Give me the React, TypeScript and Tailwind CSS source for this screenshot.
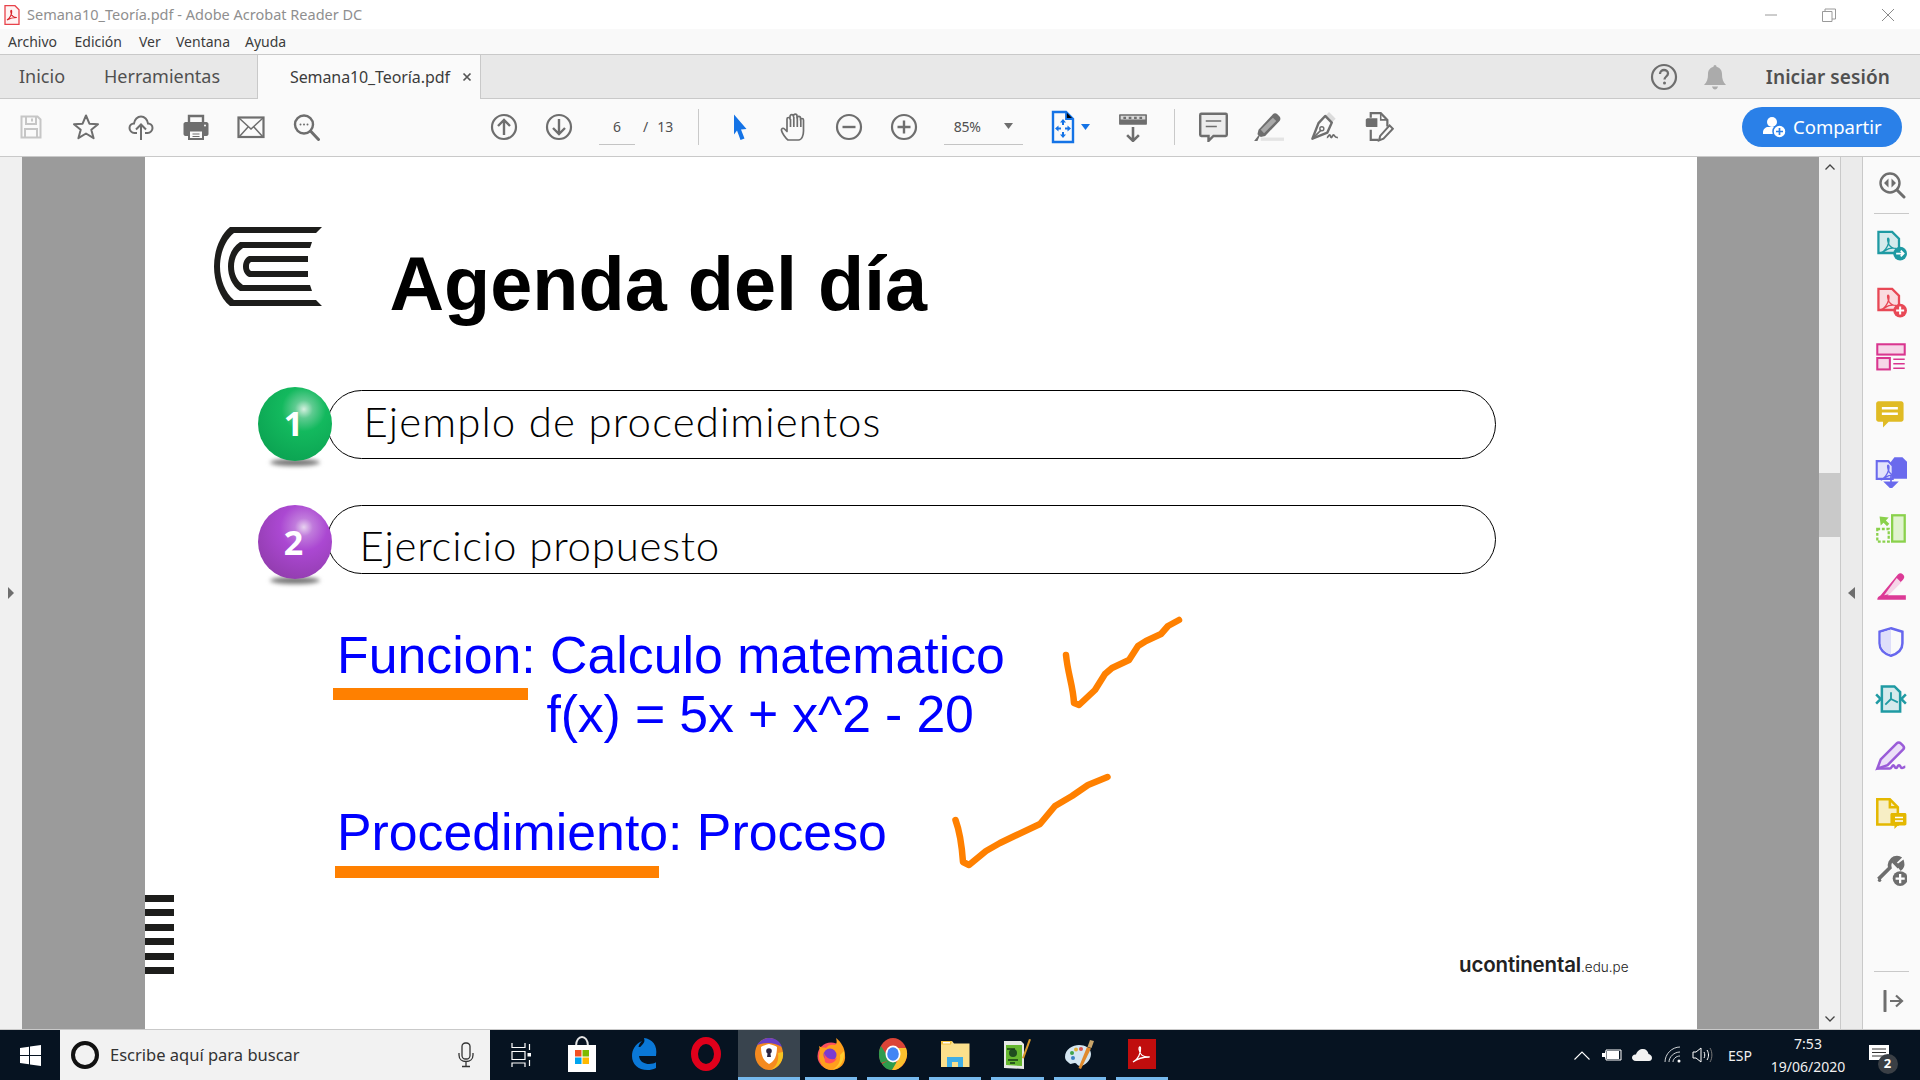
import React from "react";

const G = "#6e6e6e";
const Ui = "font-['Noto_Sans','Open_Sans',sans-serif]";

function Svg({ s = 28, children, className = "" }: { s?: number; children: React.ReactNode; className?: string }) {
  return (
    <svg width={s} height={s} viewBox="0 0 28 28" fill="none" className={className}>
      {children}
    </svg>
  );
}

const Squiggle = ({ c }: { c: string }) => (
  <path d="M5 21c3-1 6-5 7-9 .4-2 .3-4-.5-4s-.6 3 1 6c1.200 2 3 3 6 3-3-.5-7 0-9 1.500-1.500 1-3 2-4.500 2.500z" stroke={c} strokeWidth="1.200" fill="none" />
);

const tools: React.ReactNode[] = [
  <Svg key="save"><path d="M4.500 3.500h16l3 3v18h-19z" stroke="#c6c6c6" strokeWidth="2" fill="#fafafa" /><path d="M9 4v7h10V4M8 24v-8h12v8" stroke="#c6c6c6" strokeWidth="2" /><path d="M15 5.500v3" stroke="#c6c6c6" strokeWidth="2" /></Svg>,
  <Svg key="star"><path d="M14 2.500l3.400 8.200 8.600.5-6.700 5.500 2.300 8.500-7.600-4.700-7.600 4.700 2.300-8.500L2 11.200l8.600-.5z" stroke={G} strokeWidth="2" strokeLinejoin="round" /></Svg>,
  <Svg key="cloud"><path d="M10 20H7.500C4.500 20 2.500 17.500 2.500 15c0-2.500 2-4.500 4.500-4.500C7.500 6.500 10.500 3.500 14 3.500s6.500 3 7 7c2.500 0 4.500 2 4.500 4.500s-2 5-5 5H18" stroke={G} strokeWidth="2" /><path d="M14 27V12M9 16.500l5-5 5 5" stroke={G} strokeWidth="2" /></Svg>,
  <Svg key="print"><path d="M7 9V3h14v6" stroke={G} strokeWidth="2.400" /><path d="M3.500 9h21c1 0 2 1 2 2v10c0 1-1 2-2 2H22v-6H6v6H3.500c-1 0-2-1-2-2V11c0-1 1-2 2-2z" fill={G} /><path d="M7 17.500h14V26H7z" stroke={G} strokeWidth="2" /><path d="M10.500 21h7M10.500 23.500h7" stroke={G} strokeWidth="1.200" /><circle cx="23" cy="12.500" r="1" fill="#fff" /></Svg>,
  <Svg key="mail"><rect x="1.500" y="4.500" width="25" height="19.500" stroke={G} strokeWidth="2.200" /><path d="M2 5l12 11L26 5M2 24l9.500-10.500M26 24L16.500 13.500" stroke={G} strokeWidth="1.500" /></Svg>,
  <Svg key="find"><circle cx="12" cy="11.500" r="9" stroke={G} strokeWidth="2.400" /><path d="M18.500 18l8 8.500" stroke={G} strokeWidth="3" strokeLinecap="round" /><circle cx="8.500" cy="11.500" r="1" fill={G} /><circle cx="12" cy="11.500" r="1" fill={G} /><circle cx="15.500" cy="11.500" r="1" fill={G} /></Svg>,
];

const CircleArrow = ({ d }: { d: "up" | "down" }) => (
  <Svg>
    <circle cx="14" cy="14" r="12" stroke={G} strokeWidth="2.200" />
    <path d={d === "up" ? "M14 22V7M8 13l6-6 6 6" : "M14 6v15M8 15l6 6 6-6"} stroke={G} strokeWidth="2.400" />
  </Svg>
);

const RightIcons: React.ReactNode[] = [
  <Svg key="a" s={32}><path d="M3 2.500h12l6 6V21H3z" fill="#d5eaec" stroke="#1f9aa3" strokeWidth="2" /><Squiggle c="#1f9aa3" /><circle cx="22" cy="21.500" r="6" fill="#1f9aa3" /><path d="M18.500 21.500h6M22.500 19l2.500 2.500-2.500 2.500" stroke="#fff" strokeWidth="1.600" /></Svg>,
  <Svg key="b" s={32}><path d="M3 2.500h12l6 6V21H3z" fill="#fadcdf" stroke="#e84855" strokeWidth="2" /><Squiggle c="#e84855" /><circle cx="22" cy="21.500" r="6" fill="#e84855" /><path d="M18.500 21.500h7M22 18v7" stroke="#fff" strokeWidth="1.800" /></Svg>,
  <Svg key="c" s={32}><rect x="2" y="2" width="24" height="9" fill="#f6d6e8" stroke="#d9358f" strokeWidth="1.800" /><rect x="2" y="14" width="11" height="10" fill="#f6d6e8" stroke="#d9358f" strokeWidth="1.800" /><path d="M16 15h10M16 19h10M16 23h10" stroke="#d9358f" strokeWidth="1.300" /></Svg>,
  <Svg key="d" s={32}><path d="M3 2h20c1 0 2 1 2 2v14c0 1-1 2-2 2H12l-5 5v-5H3c-1 0-2-1-2-2V4c0-1 1-2 2-2z" fill="#e0bb24" /><path d="M6 8h14M6 13h14" stroke="#fff" strokeWidth="2.200" /></Svg>,
  <Svg key="e" s={32}><path d="M17 1h7l4 4v15H14V5z" fill="#6a6aed" /><path d="M1.500 4.500h10l4 4V20h-14z" fill="#e4e4fb" stroke="#6a6aed" strokeWidth="1.800" /><Squiggle c="#6a6aed" /><path d="M14 17v6M9 23h10l-5 5z" fill="#6a6aed" stroke="#6a6aed" strokeWidth="1.500" /></Svg>,
  <Svg key="f" s={32}><rect x="15" y="2" width="11" height="23" fill="#e0f3cf" stroke="#8ad14c" strokeWidth="2" /><path d="M2 14h10v11H2z" stroke="#8ad14c" strokeWidth="2" strokeDasharray="2.500 1.500" /><path d="M4 3l8 1-2.500 2.500 3 3-2 2-3-3L5 11z" fill="#8ad14c" /></Svg>,
  <Svg key="g" s={32}><path d="M2 26c0-2 1-3 3-4L20 4c1.500-1.500 3-1.500 4.500 0s1.500 3 0 4.500L11 22h16v4z" fill="#dc3a96" /><path d="M19 7l4 4-10 10-5 1z" fill="#f6d6e8" /></Svg>,
  <Svg key="h" s={32}><path d="M14 2l10 3v10c0 5-4 9-10 11C8 24 4 20 4 15V5z" fill="#fafafa" stroke="#6767ee" strokeWidth="2.200" /><path d="M14 3L5 5.800V15c0 4.500 3.500 8 9 10z" fill="#dedefa" /></Svg>,
  <Svg key="i" s={32}><path d="M6 3h11l5 5v17H6z" fill="#d5eaec" stroke="#1f9aa3" strokeWidth="2.200" /><path d="M1 10l4 4-4 4M27 10l-4 4 4 4" stroke="#1f9aa3" strokeWidth="2.200" /><path d="M14 8v6M14 14l-5 5M14 14l6 3" stroke="#1f9aa3" strokeWidth="1.600" /></Svg>,
  <Svg key="j" s={32}><path d="M2 25l3-8L19 3c1-1 2.500-1 3.500 0l2 2c1 1 1 2.500 0 3.500L11 22z" fill="#ece0f8" stroke="#9a5cd8" strokeWidth="2.200" /><path d="M2 25h11c1.500 0 2-3 3-3s1 2.500 2.500 2.500 1-2.500 2.500-2.500 1 2.500 2.500 2.500 1.500-1 3-1" stroke="#9a5cd8" strokeWidth="2.200" /></Svg>,
  <Svg key="k" s={32}><path d="M2 2h11l7 7v15H2z" fill="#f7eec5" stroke="#e4b800" strokeWidth="2.200" /><path d="M13 2v7h7" stroke="#e4b800" strokeWidth="2.200" /><path d="M15 14h11c1 0 1.500.5 1.500 1.500v8c0 1-.5 1.500-1.500 1.500h-6l-3 3v-3h-2c-1 0-1.500-.5-1.500-1.500v-8c0-1 .5-1.500 1.500-1.500z" fill="#e4b800" /><path d="M17.500 18h7M17.500 21h7" stroke="#fff" strokeWidth="1.300" /></Svg>,
  <Svg key="l" s={32}><path d="M3 22L13 12c-1-3 .5-7 4-8.500 1.500-.5 3-.5 4 0l-4 4 3 3 4-3c.5 2-.5 4.500-2.500 6" stroke={G} strokeWidth="3.200" /><circle cx="22" cy="21.500" r="6.500" fill={G} /><path d="M18 21.500h8M22 17.500v8" stroke="#fff" strokeWidth="2" /><circle cx="4" cy="23" r="1.500" fill={G} /></Svg>,
];

function Ball({ n, cls, top }: { n: string; cls: string; top: string }) {
  return (
    <div className={`absolute left-[-70px] h-[79px] w-[74px] ${top}`}>
      <div className="absolute bottom-0 left-[12px] h-[7px] w-[50px] rounded-[50%] bg-[#777] blur-[2px]" />
      <div className={`relative flex h-[74px] w-[74px] items-center justify-center rounded-full text-[34px] font-bold text-white font-['Open_Sans',sans-serif] ${cls}`}>
        <span className="mr-[2px]">{n}</span>
      </div>
    </div>
  );
}

function Pill({ text, indent, ball, top, ballTop }: { text: string; indent: string; ball: string; top: string; ballTop: string }) {
  return (
    <div className="relative ml-[182px] h-[69px] w-[1169px] rounded-[35px] border-[1.500px] border-black bg-white">
      <Ball n={ball} top={ballTop} cls={ball === "1"
        ? "bg-[radial-gradient(circle_at_62%_30%,#d5f0e0_0%,#5fcb91_13%,#13b95e_32%,#0ca553_76%,#1fce72_100%)]"
        : "bg-[radial-gradient(circle_at_62%_30%,#e8d2f0_0%,#c07bdc_13%,#ab48d2_34%,#933db0_78%,#b050dc_100%)]"} />
      <div className={`whitespace-nowrap text-[42px] leading-[48px] font-light text-black font-['Lato',sans-serif] ${indent} ${top}`}>{text}</div>
    </div>
  );
}

function TaskIcon({ children, active, cls = "" }: { children: React.ReactNode; active?: boolean; cls?: string }) {
  return (
    <div className={`relative flex h-full w-[62.200px] shrink-0 items-center justify-center ${active ? "bg-[#39444e]" : ""} ${cls}`}>
      <div className="mb-[2px]">{children}</div>
      {active !== undefined && (
        <div className={`absolute bottom-0 h-[3px] bg-[#76b9ed] ${active ? "inset-x-0" : "inset-x-[5px]"}`} />
      )}
    </div>
  );
}

export default function App() {
  return (
    <div className={`flex h-[1080px] w-[1920px] flex-col overflow-hidden bg-white ${Ui}`}>
      {/* Title bar */}
      <div className="flex h-[29px] shrink-0 items-center bg-white">
        <svg width="16" height="20" viewBox="0 0 16 20" className="ml-[4px]">
          <path d="M1 .7h10l4 4V19.300H1z" fill="#fff3f3" stroke="#e8424a" strokeWidth="1.300" />
          <path d="M3 15c3-1.500 5-6 4.700-9-.2-1.300-1.200-.8-.9 1 .4 3 2.500 5.500 6 5.500-3 0-6.500.5-9.800 2.500z" fill="none" stroke="#d8232a" strokeWidth="1.100" />
        </svg>
        <span className="ml-[7px] text-[14.500px] text-[#8f8f8f]">Semana10_Teoría.pdf - Adobe Acrobat Reader DC</span>
        <div className="ml-auto flex items-center">
          <svg width="14" height="14" viewBox="0 0 14 14" className="mr-[44px]"><path d="M1 7h12" stroke="#9a9a9a" /></svg>
          <svg width="14" height="14" viewBox="0 0 14 14" className="mr-[45px]"><path d="M.5 3.500h9.500v10H.5zM3 3.500V1h10.500v10H10" stroke="#9a9a9a" fill="none" /></svg>
          <svg width="14" height="14" viewBox="0 0 14 14" className="mr-[25px]"><path d="M1 1l12 12M13 1L1 13" stroke="#8a8a8a" /></svg>
        </div>
      </div>

      {/* Menu bar */}
      <div className="flex h-[25px] shrink-0 items-center bg-[#f9f9f9] pl-[8px] text-[14px] text-[#3c3c3c]">
        <span className="w-[66.500px]">Archivo</span>
        <span className="w-[64.500px]">Edición</span>
        <span className="w-[37px]">Ver</span>
        <span className="w-[69px]">Ventana</span>
        <span>Ayuda</span>
      </div>

      {/* Tabs */}
      <div className="flex h-[45px] shrink-0 items-stretch border-y border-[#c9c9c9] bg-[#e8e8e8]">
        <div className="flex items-center pl-[19px] text-[18px] text-[#505050]">
          <span className="w-[85px]">Inicio</span>
          <span className="w-[153px]">Herramientas</span>
        </div>
        <div className="-mb-px flex w-[224px] items-center border-x border-[#c9c9c9] bg-[#fafafa] pl-[32px] text-[16px] text-[#3c3c3c] tracking-[-0.100px]">
          <span className="w-[172px]">Semana10_Teoría.pdf</span>
          <svg width="10" height="10" viewBox="0 0 10 10"><path d="M1.500 1.500l7 7M8.500 1.500l-7 7" stroke="#555" strokeWidth="1.700" /></svg>
        </div>
        <div className="ml-auto flex items-center pr-[30px]">
          <svg width="28" height="28" viewBox="0 0 28 28" className="mr-[26px]">
            <circle cx="14" cy="14" r="12" fill="none" stroke={G} strokeWidth="2.200" />
            <path d="M10 11c0-2.500 2-4 4-4s4 1.500 4 3.500c0 3-3.500 3-3.500 6" fill="none" stroke={G} strokeWidth="2.300" />
            <circle cx="14.500" cy="20" r="1.500" fill={G} />
          </svg>
          <svg width="22" height="26" viewBox="0 0 22 26" className="mr-[40px]">
            <path d="M11 1c1 0 1.500.7 1.500 1.800C16 3.700 18 6.500 18 10c0 5 1 8 4 11H0c3-3 4-6 4-11 0-3.500 2-6.300 5.500-7.200C9.500 1.700 10 1 11 1z" fill="#ababab" />
            <path d="M8 22.500h6c-.5 2-1.700 3-3 3s-2.500-1-3-3z" fill="#ababab" />
          </svg>
          <span className="pt-[2px] text-[19px] font-semibold text-[#505050] tracking-[0.100px]">Iniciar sesión</span>
        </div>
      </div>

      {/* Toolbar */}
      <div className="flex h-[58px] shrink-0 items-center border-b border-[#c9c9c9] bg-[#fafafa] pb-[2px] pl-[3.500px]">
        {tools.map((t, i) => (
          <div key={i} className="flex w-[55px] shrink-0 justify-center">{t}</div>
        ))}
        <div className="ml-[143px] flex w-[55px] shrink-0 justify-center"><CircleArrow d="up" /></div>
        <div className="flex w-[55px] shrink-0 justify-center"><CircleArrow d="down" /></div>
        <div className="ml-[12.500px] flex h-[36px] w-[36px] items-center justify-center border-b border-[#c4c4c4] text-[14px] text-[#505050]">6</div>
        <span className="ml-[8px] text-[14px] text-[#505050]">/</span>
        <span className="ml-[9px] text-[14px] text-[#505050]">13</span>
        <div className="ml-[25px] h-[36px] w-px bg-[#c9c9c9]" />
        <div className="ml-[13px] flex w-[55px] shrink-0 justify-center">
          <Svg><path d="M8 1.500l12.500 14.500-5.500.5 3.500 9-4 1.500-3.500-9.500L8 21.500z" fill="#1473e6" /></Svg>
        </div>
        <div className="flex w-[54px] shrink-0 justify-center">
          <Svg><path d="M8 27c-2.500-2-6-7-6.500-9.500-.5-2 1.500-3 3-1.500L7 18.500V6c0-2 3-2 3 0V3.500c0-2.500 3.500-2.500 3.500 0V3c0-2.500 3.500-2.500 3.500 0v2c0-2.300 3.500-2.300 3.500 0v2c0-2 3-2 3 0v11c0 4-1.500 9-5 9zM10.500 6v8M13.800 4v10M17.300 4v10M20.800 6v8" stroke={G} strokeWidth="1.700" strokeLinejoin="round" /></Svg>
        </div>
        <div className="flex w-[55px] shrink-0 justify-center">
          <Svg><circle cx="14" cy="14" r="12" stroke={G} strokeWidth="2.200" /><path d="M7.500 14h13" stroke={G} strokeWidth="2.400" /></Svg>
        </div>
        <div className="flex w-[55px] shrink-0 justify-center">
          <Svg><circle cx="14" cy="14" r="12" stroke={G} strokeWidth="2.200" /><path d="M7.500 14h13M14 7.500v13" stroke={G} strokeWidth="2.400" /></Svg>
        </div>
        <div className="ml-[12.500px] flex h-[36px] w-[79px] shrink-0 items-center border-b border-[#c4c4c4] pl-[10px] text-[14px] text-[#505050] tracking-[-0.300px]">
          <span className="w-[50px]">85%</span>
          <svg width="9" height="6" viewBox="0 0 9 6"><path d="M0 0h9L4.500 6z" fill={G} /></svg>
        </div>
        <div className="ml-[28px] flex w-[42px] shrink-0 items-center">
          <svg width="24" height="34" viewBox="0 0 24 34">
            <path d="M2 2h13l7 7v23H2z" fill="#fafafa" stroke="#1473e6" strokeWidth="2.400" />
            <path d="M15 2v7h7" stroke="#1473e6" strokeWidth="1.800" />
            <path d="M12 9l-3 3.500h2V15h2v-2.500h2zM12 28l-3-3.500h2V22h2v2.500h2zM4 18.500L7.500 15.500v2H10v2H7.500v2zM20 18.500L16.500 15.500v2H14v2h2.500v2z" fill="#1473e6" />
          </svg>
          <svg width="9" height="6" viewBox="0 0 9 6" className="ml-[6px]"><path d="M0 0h9L4.500 6z" fill="#1473e6" /></svg>
        </div>
        <div className="ml-[13px] flex w-[55px] shrink-0 justify-center">
          <Svg s={30}><path d="M2 2h24c.7 0 1 .3 1 1v8c0 .7-.3 1-1 1H2c-.7 0-1-.3-1-1V3c0-.7.3-1 1-1z" fill={G} /><path d="M2.500 3.500h23v3.500h-23z" fill="#d8d8d8" /><path d="M5 5.500h2.500M10 5.500h2.500M15 5.500h2.500M20 5.500h2.500" stroke={G} strokeWidth="2" /><path d="M14 14v13M8.500 21.500l5.500 5.500 5.500-5.500" stroke={G} strokeWidth="2.400" /></Svg>
        </div>
        <div className="ml-[13.500px] h-[36px] w-px bg-[#c9c9c9]" />
        <div className="ml-[11px] flex w-[55px] shrink-0 justify-center">
          <Svg s={31}><path d="M3 2.500h22c.7 0 1 .3 1 1v18c0 .7-.3 1-1 1H14l-4.500 4.500v-4.500H3c-.7 0-1-.3-1-1v-18c0-.7.3-1 1-1z" fill="#ededed" stroke={G} strokeWidth="2.200" /><path d="M7 9h14M7 14h10" stroke={G} strokeWidth="1.500" /></Svg>
        </div>
        <div className="flex w-[55px] shrink-0 justify-center">
          <Svg s={31}><path d="M7 24h21v3H7z" fill="#e4e4e4" /><path d="M1 27l4-5-1-1 1-4L18 3c1-1.300 2.800-1.300 4 0l2 2c1 1.200 1 2.800 0 4L11 22.500l-4 1-1-1-2 4.500z" fill={G} /><path d="M18 6l3 3-11 11-3-3z" fill="#a8a8a8" /></Svg>
        </div>
        <div className="flex w-[55px] shrink-0 justify-center">
          <Svg s={31}><path d="M19 1l6 6-3 3-6-6z" fill="#dcdcdc" /><path d="M15.500 4.500l6 6-4 9L4 25l5.500-14z" fill="#fafafa" stroke={G} strokeWidth="2.200" strokeLinejoin="round" /><path d="M4 25l8-8" stroke={G} strokeWidth="1.500" /><circle cx="12.500" cy="16" r="1.800" stroke={G} strokeWidth="1.300" /><path d="M17 24c1.500 0 1.500-2.500 2.500-2.500s.5 2.500 1.500 2.500 1-2.500 2-2.500.5 2.500 4 2.500" stroke={G} strokeWidth="1.600" /></Svg>
        </div>
        <div className="flex w-[55px] shrink-0 justify-center">
          <Svg s={31}><path d="M5 6.500h8v8H4c-1 0-1.500-.5-1.500-1.500V8c0-1 1-1.500 2.500-1.500z" fill={G} /><path d="M7 6V2h9l6 6v6" stroke={G} strokeWidth="2" /><path d="M16 2v6h6" stroke={G} strokeWidth="1.400" /><path d="M7 17v9h7" stroke={G} strokeWidth="2" /><path d="M24 13l3 3-8.500 9-4 1.500 1-4z" fill="#fafafa" stroke={G} strokeWidth="1.800" /></Svg>
        </div>
        <div className="ml-auto mr-[18px] flex h-[40px] w-[160px] items-center rounded-full bg-[#2a80e8] pl-[20px] text-[18.500px] text-white">
          <svg width="25" height="24" viewBox="0 0 25 24">
            <circle cx="10" cy="7" r="5" fill="#fff" />
            <path d="M1 17c0-3 3-5 5-5h8c2 0 3 2 3 3l-3 4H1z" fill="#fff" />
            <circle cx="17.500" cy="16.500" r="6.500" fill="#fff" stroke="#2a80e8" strokeWidth="1.500" />
            <path d="M14 16.500h7M17.500 13v7" stroke="#2a80e8" strokeWidth="1.700" />
          </svg>
          <span className="ml-[6px]">Compartir</span>
        </div>
      </div>

      {/* Main */}
      <div className="flex min-h-0 flex-1 border-b border-[#c9c9c9]">
        <div className="flex w-[22px] shrink-0 items-center justify-center bg-[#f0f0f0]">
          <svg width="8" height="12" viewBox="0 0 8 12"><path d="M1 0l6 6-6 6z" fill={G} /></svg>
        </div>
        <div className="flex min-w-0 flex-1 justify-center bg-[#9b9b9b] px-[123px]">
          <div className="relative flex h-full w-[1552px] shrink-0 flex-col bg-white">
            {/* Header */}
            <div className="flex h-[168px] shrink-0 items-start pl-[69px] pt-[70px]">
              <svg width="108" height="79" viewBox="0 0 108 79" fill="#1d1d1b">
                <path d="M108 0H16C6 8 0 24 0 39.500 0 55 6 71 16 79H108L102 73H20C11 66 6 52 6 39.500 6 27 11 13 20 6H102Z" />
                <path d="M98 15H26C18 20 14 30 14 39.500 14 49 18 59 26 64H98L96 58H29C23 54 20 47 20 39.500 20 32 23 25 29 21H96Z" />
                <path d="M94 29H35C31 31 29 35 29 39.500 29 44 31 48 35 50H94V44H37C35 43 35 41 35 39.500 35 38 35 36 37 35H94Z" />
              </svg>
              <div className="ml-[68px] mt-[12px] whitespace-nowrap text-[75.600px] font-bold leading-[90px] text-black font-['Liberation_Sans',sans-serif]">Agenda del día</div>
            </div>
            {/* Agenda */}
            <div className="mt-[65px] flex flex-col gap-[46px]">
              <Pill text="Ejemplo de procedimientos" indent="pl-[36px] tracking-[1.100px]" ball="1" top="pt-[6px]" ballTop="top-[-4.500px]" />
              <Pill text="Ejercicio propuesto" indent="pl-[32px] tracking-[0.750px]" ball="2" top="pt-[14.500px]" ballTop="top-[-1px]" />
            </div>
            {/* Blue text */}
            <div className="ml-[192.500px] mt-[52px] text-[51.800px] leading-[59px] text-[#0000ff] font-['Liberation_Sans',sans-serif]">
              <div>Funcion: Calculo matematico</div>
              <div className="ml-[209.500px] tracking-[-0.150px]">f(x) = 5x + x^2 - 20</div>
              <div className="mt-[59px]">Procedimiento: Proceso</div>
            </div>
            {/* Footer */}
            <div className="mt-auto flex items-end justify-between pb-[52px] pr-[68px]">
              <div className="mb-[3px] flex w-[29px] flex-col gap-[7.400px]">
                {[0, 1, 2, 3, 4, 5].map((i) => (
                  <div key={i} className="h-[7px] bg-[#1d1d1b]" />
                ))}
              </div>
              <div className="flex items-baseline text-[#222] font-['Inter',sans-serif]">
                <span className="text-[20.500px] font-semibold leading-[24px] tracking-[-0.150px]">ucontinental</span>
                <span className="text-[13.500px] font-light">.edu.pe</span>
              </div>
            </div>

            {/* Hand-drawn annotations on the page */}
            <div className="absolute left-[188px] top-[531px] h-[12px] w-[195px] bg-[#ff8000]" />
            <div className="absolute left-[190px] top-[709px] h-[12px] w-[324px] bg-[#ff8000]" />
            <svg className="absolute left-0 top-0 overflow-visible" width="1552" height="873" viewBox="145 157 1552 873" fill="none">
              <path d="M1066 655 C1068 675 1073 685 1074 703 L1079 705 L1095 690 L1105 674 L1112 668 L1129 660 L1138 646 L1146 641 L1161 634 L1168 626 L1179 620" stroke="#ff8000" strokeWidth="6.500" strokeLinecap="round" strokeLinejoin="round" />
              <path d="M955.500 820 C960 832 962 848 963 862 L969 865 L986 851 L1000 843 L1014.500 836 L1040 824 L1055 806 L1072 796 L1088 785 L1107.500 777" stroke="#ff8000" strokeWidth="6.500" strokeLinecap="round" strokeLinejoin="round" />
            </svg>
          </div>
        </div>
        {/* Scrollbar */}
        <div className="flex w-[21px] shrink-0 flex-col items-center bg-[#f0f0f0]">
          <svg width="10" height="6" viewBox="0 0 10 6" className="mt-[7px] shrink-0"><path d="M.5 5.500L5 1l4.500 4.500" fill="none" stroke="#444" strokeWidth="1.300" /></svg>
          <div className="mt-[303px] h-[64px] w-full bg-[#c9c9c9]" />
          <svg width="10" height="6" viewBox="0 0 10 6" className="mb-[7px] mt-auto shrink-0"><path d="M.5.500L5 5l4.500-4.500" fill="none" stroke="#444" strokeWidth="1.300" /></svg>
        </div>
        <div className="flex w-[23px] shrink-0 items-center justify-center border-x border-[#c9c9c9] bg-[#ebebeb]">
          <svg width="8" height="12" viewBox="0 0 8 12"><path d="M7 0L0 6l7 6z" fill={G} /></svg>
        </div>
        {/* Right tool pane */}
        <div className="flex w-[57px] shrink-0 flex-col items-center bg-[#fafafa]">
          <div className="mt-[14px] flex h-[43px] w-[35px] shrink-0 items-start justify-center border-b border-[#c9c9c9]">
            <Svg><circle cx="12" cy="12" r="9.500" stroke={G} strokeWidth="2.400" /><path d="M19 19l7 7" stroke={G} strokeWidth="3" strokeLinecap="round" /><path d="M10.500 7.500v9L6 12zM13.500 7.500v9L18 12z" fill={G} /></Svg>
          </div>
          <div className="mt-[2.500px] flex flex-col items-center">
            {RightIcons.map((ic, i) => (
              <div key={i} className="flex h-[56.800px] w-[57px] shrink-0 items-center justify-center pr-[1px]">{ic}</div>
            ))}
          </div>
          <div className="mb-[13px] mt-auto flex h-[45px] w-[35px] shrink-0 items-start justify-center border-t border-[#c9c9c9] pl-[3px] pt-[18px]">
            <svg width="22" height="22" viewBox="0 0 22 22"><path d="M3 1v20" stroke={G} strokeWidth="3" strokeLinecap="round" /><path d="M8 11h12M14 5.500l6 5.500-6 5.500" stroke={G} strokeWidth="2.200" fill="none" /></svg>
          </div>
        </div>
      </div>

      {/* Taskbar */}
      <div className="flex h-[50px] shrink-0 items-center bg-[#061321] text-white">
        <div className="flex h-full w-[60px] shrink-0 items-center justify-center">
          <svg width="21" height="21" viewBox="0 0 21 21" fill="#fff"><path d="M0 3l9-1.300V10H0zM10 1.500L21 0v10H10zM0 11h9v8.300L0 18zM10 11h11v10l-11-1.500z" /></svg>
        </div>
        <div className="flex h-full w-[430px] shrink-0 items-center bg-[#f2f2f2] pl-[11px] pr-[16px] text-[16.500px] text-[#333]">
          <div className="h-[28px] w-[28px] rounded-full border-[4px] border-[#111]" />
          <span className="ml-[11px]">Escribe aquí para buscar</span>
          <svg width="16" height="26" viewBox="0 0 16 26" className="ml-auto" fill="none"><rect x="4" y="1" width="8" height="16" rx="3.500" stroke="#333" strokeWidth="1.300" /><path d="M1 11v2c0 4 3 6.500 7 6.500s7-2.500 7-6.500v-2M8 19.500V24M4 24.500h8" stroke="#333" strokeWidth="1.300" /></svg>
        </div>
        <div className="flex h-full w-[61px] shrink-0 items-center justify-center">
          <svg width="20" height="24" viewBox="0 0 20 24" fill="none" stroke="#fff" strokeWidth="1.200"><path d="M1 0v4.500h13V0M1 8.500h13v8H1zM1 24v-4h13v4M18.500 1v6M18.500 17v6" /><rect x="16.500" y="10" width="3.500" height="3.500" fill="#fff" stroke="none" /></svg>
        </div>
        <TaskIcon>
          <svg width="30" height="36" viewBox="0 0 30 36"><path d="M9 10c0-12 12-12 12 0" fill="none" stroke="#e5e5e5" strokeWidth="2" /><path d="M1 9h28v27H1z" fill="#fff" /><path d="M8 14h6.500v6.500H8z" fill="#f25022" /><path d="M15.500 14H22v6.500h-6.500z" fill="#7fba00" /><path d="M8 21.500h6.500V28H8z" fill="#00a4ef" /><path d="M15.500 21.500H22V28h-6.500z" fill="#ffb900" /></svg>
        </TaskIcon>
        <TaskIcon>
          <svg width="30" height="32" viewBox="0 0 30 32"><path d="M27 18H10c.5 6 6 8 10 8 3 0 5.500-.7 7-1.700V30c-3 1.500-5.500 2-8.500 2C9 32 3 26 3 18 3 12 6 6 13 3c-2 2-3 3.500-3.500 6 5-1 8-1 9 2v1h-9C12 6 17 6 15 0c8 1 14 7 12 18z" fill="#0a78d7" /></svg>
        </TaskIcon>
        <TaskIcon>
          <div className="h-[34px] w-[30px] rounded-[50%] border-[7px] border-[#e0001b] bg-[#061321]" />
        </TaskIcon>
        <TaskIcon active>
          <svg width="30" height="32" viewBox="0 0 30 32"><ellipse cx="15" cy="16" rx="14" ry="16" fill="#f58a1f" /><path d="M3 7C7 1 12 0 15 0c6 0 11 3 13 9-8-5-17-5-25-2z" fill="#6a3fc4" /><path d="M29 14c1 8-4 16-13 18 7-3 9-10 8-17z" fill="#f6c321" /><path d="M15 6c4 1 7 2 8 3 0 8-2 14-8 17-6-3-8-9-8-17 1-1 4-2 8-3z" fill="#fff" /><circle cx="15" cy="13" r="2.800" fill="#2c2440" /><path d="M13.800 14h2.400l.8 5h-4z" fill="#2c2440" /></svg>
        </TaskIcon>
        <TaskIcon active={false}>
          <svg width="30" height="32" viewBox="0 0 30 32"><circle cx="15" cy="18" r="13.500" fill="#ff4f5e" /><path d="M3 8c1 4 1 6 0 10 0 8 6 14 12 14 10 0 15-7 14-15 0-7-4-13-9-17 1 3 1 6-1 7-4-1-7 0-9 3-2-1-5 0-7-2z" fill="#ff9f1c" /><path d="M28 13c1 8-3 17-12 19 6-3 9-9 8-15z" fill="#ffcb2f" /><circle cx="14" cy="17" r="6.500" fill="#7b3bd0" /><path d="M8 15c2 5 7 8 13 5-2 5-8 7-12 4z" fill="#ff4f5e" /></svg>
        </TaskIcon>
        <TaskIcon active={false}>
          <svg width="30" height="32" viewBox="0 0 30 32"><ellipse cx="15" cy="16" rx="14" ry="16" fill="#db4437" /><path d="M3 25C.5 20 0 13 3 8l9 14z" fill="#2e9c4d" /><path d="M4 26l9-5 6 4-5 7C9 32 6 29 4 26z" fill="#2e9c4d" /><path d="M15 10h13c3 7 0 16-8 21-2 1-4 1-6 1l7-12c1-3 0-7-6-10z" fill="#fbc02d" /><ellipse cx="15" cy="16" rx="7.500" ry="8.500" fill="#fff" /><ellipse cx="15" cy="16" rx="5.800" ry="6.800" fill="#4285f4" /></svg>
        </TaskIcon>
        <TaskIcon active={false}>
          <svg width="30" height="28" viewBox="0 0 30 28"><path d="M1 1h11l2 2.500h15.500V27H1z" fill="#fbe08c" /><path d="M1 1h11l-1 3.500H1z" fill="#f2c23e" /><path d="M3 2h7v1.500H3z" fill="#fff" /><path d="M7 27V17h16v10h-5v-5h-6v5z" fill="#40aee6" /></svg>
        </TaskIcon>
        <TaskIcon active={false}>
          <svg width="28" height="32" viewBox="0 0 28 32"><path d="M1 3h17l3 3v25L1 30z" fill="#e8eae6" /><path d="M3 7h16v21l-16-1z" fill="#66b82f" /><circle cx="10" cy="15" r="4" fill="#1f4d1f" /><path d="M5 22h10M7 25h5M4 11h8" stroke="#163a16" strokeWidth="1.500" /><path d="M26 1l2 .5-7 19-2-.5z" fill="#d99a2b" /></svg>
        </TaskIcon>
        <TaskIcon active={false}>
          <svg width="32" height="32" viewBox="0 0 32 32"><path d="M1 19C1 11 9 7 15 7c6 0 12 3 12 9 0 6-6 12-11 12-3 0-3-3-5-3-3 0-4 2-6 0-2-2-4-3-4-6z" fill="#d4e6f1" /><circle cx="8" cy="15" r="2" fill="#3fa34d" /><circle cx="12" cy="11.500" r="2" fill="#e3b23c" /><circle cx="17" cy="11" r="2" fill="#d9534f" /><circle cx="9" cy="20" r="2" fill="#3b82c4" /><path d="M23 9l4 1.500L17 31l-2.500-1z" fill="#e08a2c" /><path d="M26 2l4 1-2.500 7-4-1z" fill="#c9a56a" /></svg>
        </TaskIcon>
        <TaskIcon active={false}>
          <svg width="28" height="30" viewBox="0 0 28 30"><rect width="28" height="30" fill="#c00d0d" /><path d="M5 23c5-2.500 8-9 7.500-14-.3-2-1.800-1.200-1.400 1.500.6 4.500 4 8 10.500 7.500-5 0-11 .7-16.600 5z" fill="none" stroke="#fff" strokeWidth="1.300" /></svg>
        </TaskIcon>
        <div className="ml-auto flex h-full items-center text-[14px] text-[#f0f0f0]">
          <svg width="16" height="9" viewBox="0 0 16 9" className="mr-[12px]"><path d="M.5 8.500L8 1l7.500 7.500" fill="none" stroke="#fff" strokeWidth="1.100" /></svg>
          <svg width="20" height="12" viewBox="0 0 20 12" className="mr-[10px]"><path d="M4 1h15v10H4z" fill="none" stroke="#fff" /><path d="M5 2h12v8H5zM0 4h3V2l1 1v6l-1 1V8H0z" fill="#fff" /></svg>
          <svg width="20" height="12" viewBox="0 0 20 12" className="mr-[12px]"><path d="M4 12C1 12 0 10 0 8.500 0 6.500 2 5 4 5.500 5 2 8 0 11 0c3 0 5 2 5.500 5C18.500 5.500 20 7 20 9c0 1.500-1 3-3 3z" fill="#f2f2f2" /></svg>
          <svg width="18" height="18" viewBox="0 0 18 18" className="mr-[9.500px]" fill="none" stroke="#cfd3d6" strokeWidth="1"><path d="M1 16C1 8 8 1 16 1M5 16c0-5 5-10 11-10M9 16c0-3 3-6 7-6" /><circle cx="15" cy="15" r="1.500" fill="#fff" stroke="none" /></svg>
          <svg width="21" height="16" viewBox="0 0 21 16" className="mr-[15.500px]" fill="none" stroke="#fff" strokeWidth="1"><path d="M1 5h3l5-4v14l-5-4H1zM12 5c1 1.500 1 4.500 0 6M15 3c2 3 2 7 0 10" /><path d="M18 1c2.500 4 2.500 10 0 14" stroke="#777" /></svg>
          <span className="w-[28px] whitespace-nowrap">ESP</span>
          <div className="ml-[13px] flex w-[78px] flex-col items-center leading-[23px]">
            <span>7:53</span>
            <span>19/06/2020</span>
          </div>
          <div className="relative ml-[22px] mr-[29px] h-[50px] w-[22px]">
            <svg width="20" height="17" viewBox="0 0 20 17" className="absolute left-0 top-[15px]"><path d="M0 0h20v15H0z" fill="#fff" /><path d="M3 4h14M3 7.500h14M3 11h14" stroke="#333" /></svg>
            <div className="absolute left-[8.500px] top-[24px] flex h-[20px] w-[20px] items-center justify-center rounded-full bg-[#3a3f45] text-[13px] font-bold text-white">2</div>
          </div>
        </div>
      </div>
    </div>
  );
}
